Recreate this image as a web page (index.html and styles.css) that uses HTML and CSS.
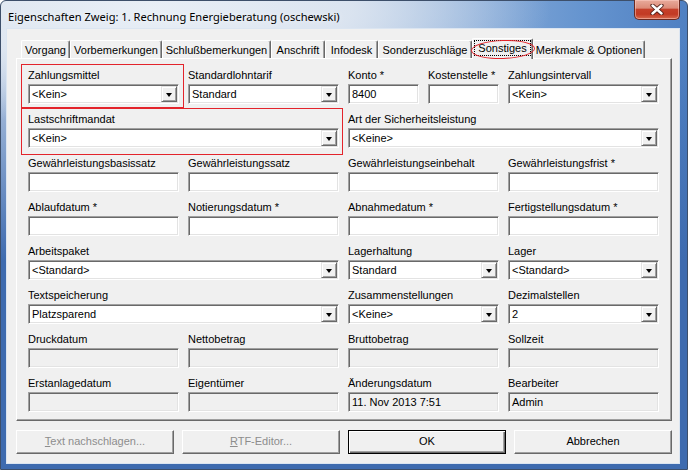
FILE: index.html
```html
<!DOCTYPE html>
<html lang="de">
<head>
  <meta charset="UTF-8">
  <title>Eigenschaften Zweig</title>
  <link rel="stylesheet" href="styles.css">
</head>
<body>
  <div class="window">
    <div class="titlebar">
      <span class="title">Eigenschaften Zweig: 1. Rechnung Energieberatung (oschewski)</span>
      <div class="close">
        <svg width="14" height="11" viewBox="0 0 14 11">
          <path d="M2.5 1.5 L11.5 9.5 M11.5 1.5 L2.5 9.5" stroke="#4a1a14" stroke-width="4.2" stroke-linecap="round" fill="none"/>
          <path d="M2.5 1.5 L11.5 9.5 M11.5 1.5 L2.5 9.5" stroke="#fff" stroke-width="2.4" stroke-linecap="round" fill="none"/>
        </svg>
      </div>
    </div>

    <div class="client">
      <div class="tabs">
        <div class="tab t-vorgang">Vorgang</div>
        <div class="tab t-vorbem">Vorbemerkungen</div>
        <div class="tab t-schluss">Schlußbemerkungen</div>
        <div class="tab t-anschrift">Anschrift</div>
        <div class="tab t-infodesk">Infodesk</div>
        <div class="tab t-zuschlag">Sonderzuschläge</div>
        <div class="tab tab-active t-sonstiges"><span class="focus">Sonstiges</span><span class="ring"></span></div>
        <div class="tab t-merkmale">Merkmale &amp; Optionen</div>
      </div>

      <div class="panel">
        <span class="mark mark-zahlung"></span>
        <span class="mark mark-mandat"></span>

        <div class="grid">
          <div class="field">
            <label>Zahlungsmittel</label>
            <div class="combo"><span>&lt;Kein&gt;</span><i class="drop"></i></div>
          </div>
          <div class="field">
            <label>Standardlohntarif</label>
            <div class="combo"><span>Standard</span><i class="drop"></i></div>
          </div>
          <div class="pair">
            <div class="field">
              <label>Konto *</label>
              <div class="edit">8400</div>
            </div>
            <div class="field">
              <label>Kostenstelle *</label>
              <div class="edit"></div>
            </div>
          </div>
          <div class="field">
            <label>Zahlungsintervall</label>
            <div class="combo"><span>&lt;Kein&gt;</span><i class="drop"></i></div>
          </div>

          <div class="field wide">
            <label>Lastschriftmandat</label>
            <div class="combo"><span>&lt;Kein&gt;</span><i class="drop"></i></div>
          </div>
          <div class="field wide">
            <label>Art der Sicherheitsleistung</label>
            <div class="combo"><span>&lt;Keine&gt;</span><i class="drop"></i></div>
          </div>

          <div class="field">
            <label>Gewährleistungsbasissatz</label>
            <div class="edit"></div>
          </div>
          <div class="field">
            <label>Gewährleistungssatz</label>
            <div class="edit"></div>
          </div>
          <div class="field">
            <label>Gewährleistungseinbehalt</label>
            <div class="edit"></div>
          </div>
          <div class="field">
            <label>Gewährleistungsfrist *</label>
            <div class="edit"></div>
          </div>

          <div class="field">
            <label>Ablaufdatum *</label>
            <div class="edit"></div>
          </div>
          <div class="field">
            <label>Notierungsdatum *</label>
            <div class="edit"></div>
          </div>
          <div class="field">
            <label>Abnahmedatum *</label>
            <div class="edit"></div>
          </div>
          <div class="field">
            <label>Fertigstellungsdatum *</label>
            <div class="edit"></div>
          </div>

          <div class="field wide">
            <label>Arbeitspaket</label>
            <div class="combo"><span>&lt;Standard&gt;</span><i class="drop"></i></div>
          </div>
          <div class="field">
            <label>Lagerhaltung</label>
            <div class="combo"><span>Standard</span><i class="drop"></i></div>
          </div>
          <div class="field">
            <label>Lager</label>
            <div class="combo"><span>&lt;Standard&gt;</span><i class="drop"></i></div>
          </div>

          <div class="field wide">
            <label>Textspeicherung</label>
            <div class="combo"><span>Platzsparend</span><i class="drop"></i></div>
          </div>
          <div class="field">
            <label>Zusammenstellungen</label>
            <div class="combo"><span>&lt;Keine&gt;</span><i class="drop"></i></div>
          </div>
          <div class="field">
            <label>Dezimalstellen</label>
            <div class="combo"><span>2</span><i class="drop"></i></div>
          </div>

          <div class="field">
            <label>Druckdatum</label>
            <div class="edit disabled"></div>
          </div>
          <div class="field">
            <label>Nettobetrag</label>
            <div class="edit disabled"></div>
          </div>
          <div class="field">
            <label>Bruttobetrag</label>
            <div class="edit disabled"></div>
          </div>
          <div class="field">
            <label>Sollzeit</label>
            <div class="edit disabled"></div>
          </div>

          <div class="field">
            <label>Erstanlagedatum</label>
            <div class="edit disabled"></div>
          </div>
          <div class="field">
            <label>Eigentümer</label>
            <div class="edit disabled"></div>
          </div>
          <div class="field">
            <label>Änderungsdatum</label>
            <div class="edit disabled">11. Nov 2013 7:51</div>
          </div>
          <div class="field">
            <label>Bearbeiter</label>
            <div class="edit disabled">Admin</div>
          </div>
        </div>
      </div>

      <div class="buttons">
        <div class="btn btn-off"><u>T</u>ext nachschlagen...</div>
        <div class="btn btn-off"><u>R</u>TF-Editor...</div>
        <div class="btn btn-default">OK</div>
        <div class="btn">Abbrechen</div>
      </div>
    </div>
  </div>
</body>
</html>
```

FILE: styles.css
```css
html, body {
  margin: 0;
  padding: 0;
}
body {
  width: 688px;
  height: 470px;
  overflow: hidden;
  font-family: 'Liberation Sans', Arial, sans-serif;
  font-size: 11px;
  color: #000;
}
.window {
  width: 688px;
  height: 470px;
  box-sizing: border-box;
  border: 1px solid #3d4f6a;
  border-radius: 6px 6px 0 0;
  background:
    radial-gradient(ellipse 400px 120px at 150px 8px, rgba(233, 239, 246, 1) 0%, rgba(226, 233, 242, 0.85) 50%, rgba(226, 233, 242, 0) 100%),
    linear-gradient(to bottom, rgba(62, 107, 175, 0) 40px, rgba(62, 107, 175, 1) 260px),
    linear-gradient(to right, #c6d5e9 0%, #adc4e2 50%, #6594cf 85%, #4f80c2 100%);
  display: flex;
  flex-direction: column;
}
.titlebar {
  height: 28px;
  display: flex;
  align-items: flex-start;
  padding: 0 7px 0 7px;
}
.title {
  font-family: 'Noto Sans', 'Open Sans', sans-serif;
  font-size: 11.1px;
  line-height: 16px;
  margin-top: 8px;
  color: #000;
  text-shadow: 0 0 6px rgba(255, 255, 255, 0.9);
  white-space: nowrap;
}
.close {
  margin-left: auto;
  margin-top: -1px;
  width: 44px;
  height: 19px;
  border: 1px solid #6a2a22;
  border-top: none;
  border-radius: 0 0 5px 5px;
  background: linear-gradient(to bottom, #e8ab9c 0%, #dc8b78 42%, #c5402a 50%, #c23a24 75%, #d76a4e 100%);
  box-shadow: inset 0 0 0 1px rgba(255, 210, 200, 0.5);
  display: flex;
  align-items: center;
  justify-content: center;
}
.client {
  margin: 0 8px 0 6px;
  height: 434px;
  background: #f0f0f0;
  box-shadow: 0 0 0 1px #dbe5f1;
  padding-top: 9px;
  box-sizing: border-box;
}

/* tabs */
.tabs {
  display: flex;
  align-items: flex-end;
  height: 20px;
  margin-left: 14px;
  position: relative;
  z-index: 2;
}
.tab {
  height: 18px;
  box-sizing: border-box;
  border-top: 1px solid #fff;
  border-left: 1px solid #fff;
  border-right: 1px solid #696969;
  box-shadow: inset -1px 0 #a0a0a0;
  border-radius: 2px 2px 0 0;
  padding-top: 2px;
  line-height: 14px;
  text-align: center;
  white-space: nowrap;
}
.tab-active {
  height: 21px;
  margin-bottom: -1px;
  background: #f0f0f0;
  position: relative;
  padding: 1px 1px 0 1px;
}
.tab-active .focus {
  display: block;
  height: 16px;
  line-height: 14px;
  border: 1px dotted #000;
  box-sizing: border-box;
}
.tab-active .ring {
  position: absolute;
  left: -2px;
  top: 1px;
  width: 62px;
  height: 17px;
  border: 1px solid #e3242b;
  border-radius: 50%;
  transform: rotate(-2deg);
}
.t-vorgang { width: 49px; }
.t-vorbem { width: 92px; }
.t-schluss { width: 109px; }
.t-anschrift { width: 54px; }
.t-infodesk { width: 53px; }
.t-zuschlag { width: 94px; }
.t-sonstiges { width: 61px; }
.t-merkmale { width: 112px; }

/* tab page */
.panel {
  margin-left: 9px;
  width: 656px;
  height: 363px;
  box-sizing: border-box;
  border-top: 1px solid #fff;
  border-left: 1px solid #fff;
  border-right: 1px solid #696969;
  border-bottom: 1px solid #696969;
  box-shadow: inset -1px -1px #a0a0a0;
  padding: 9px 0 0 11px;
  position: relative;
}
.mark {
  position: absolute;
  border: 1px solid #e3242b;
  box-sizing: border-box;
}
.mark-zahlung {
  left: 4px;
  top: 5px;
  width: 163px;
  height: 44px;
}
.mark-mandat {
  left: 4px;
  top: 49px;
  width: 322px;
  height: 47px;
}
.grid {
  display: grid;
  grid-template-columns: repeat(4, 151px);
  grid-auto-rows: 36px;
  column-gap: 9px;
  row-gap: 8px;
}
.pair {
  display: grid;
  grid-template-columns: 1fr 1fr;
  column-gap: 9px;
}
.field label {
  display: block;
  line-height: 14px;
  margin-bottom: 2px;
  white-space: nowrap;
}
.field.wide {
  grid-column: span 2;
}
.edit, .combo {
  height: 20px;
  box-sizing: border-box;
  border: 1px solid;
  border-color: #a0a0a0 #fff #fff #a0a0a0;
  box-shadow: inset 1px 1px #696969, inset -1px -1px #e3e3e3;
  background: #fff;
  line-height: 16px;
  padding: 1px 3px;
  white-space: nowrap;
}
.edit.disabled {
  background: #f0f0f0;
}
.combo {
  display: flex;
  padding-right: 1px;
}
.combo span {
  flex: 1;
}
.drop {
  width: 16px;
  height: 16px;
  margin-top: 0;
  box-sizing: border-box;
  border: 1px solid;
  border-color: #e3e3e3 #696969 #696969 #e3e3e3;
  box-shadow: inset 1px 1px #fff, inset -1px -1px #a0a0a0;
  background: #f0f0f0;
  display: flex;
  align-items: center;
  justify-content: center;
}
.drop::after {
  content: '';
  border-left: 3.5px solid transparent;
  border-right: 3.5px solid transparent;
  border-top: 4px solid #000;
  margin-top: 1px;
}

/* dialog buttons */
.buttons {
  display: flex;
  gap: 8px;
  margin: 9px 0 0 9px;
}
.btn {
  width: 158px;
  height: 24px;
  box-sizing: border-box;
  border: 1px solid;
  border-color: #fff #696969 #696969 #fff;
  box-shadow: inset -1px -1px #a0a0a0;
  text-align: center;
  line-height: 21px;
}
.btn-off {
  color: #8d8d8d;
}
.btn-default {
  border: 1px solid #000;
  box-shadow: inset 1px 1px #fff, inset -1px -1px #696969, inset -2px -2px #a0a0a0;
}
```
